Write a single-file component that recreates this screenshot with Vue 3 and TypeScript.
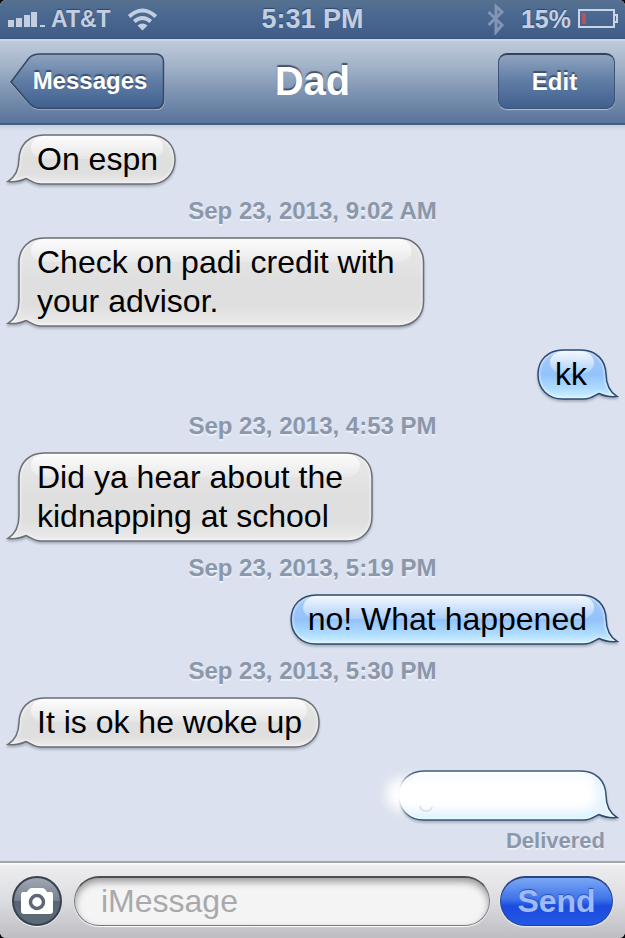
<script setup lang="ts">
import { onBeforeUnmount, onMounted, reactive, ref } from 'vue'

interface Entry {
  kind: 'stamp' | 'received' | 'sent'
  text: string
  smudged?: boolean
}

const entries: Entry[] = [
  { kind: 'received', text: 'On espn' },
  { kind: 'stamp', text: 'Sep 23, 2013, 9:02 AM' },
  { kind: 'received', text: 'Check on padi credit with\nyour advisor.' },
  { kind: 'sent', text: 'kk' },
  { kind: 'stamp', text: 'Sep 23, 2013, 4:53 PM' },
  { kind: 'received', text: 'Did ya hear about the\nkidnapping at school' },
  { kind: 'stamp', text: 'Sep 23, 2013, 5:19 PM' },
  { kind: 'sent', text: 'no! What happened' },
  { kind: 'stamp', text: 'Sep 23, 2013, 5:30 PM' },
  { kind: 'received', text: 'It is ok he woke up' },
  { kind: 'sent', text: '', smudged: true },
]

const draft = ref('')
const list = ref<HTMLElement | null>(null)
const sizes = reactive<Record<number, { w: number; h: number }>>({})
let observer: ResizeObserver | undefined

function measure() {
  list.value?.querySelectorAll<HTMLElement>('.bubble').forEach((el) => {
    sizes[Number(el.dataset.index)] = { w: el.offsetWidth, h: el.offsetHeight }
  })
}

onMounted(() => {
  measure()
  observer = new ResizeObserver(measure)
  list.value?.querySelectorAll('.bubble').forEach((el) => observer?.observe(el))
})
onBeforeUnmount(() => observer?.disconnect())

const width = (i: number) => sizes[i]?.w ?? 100
const height = (i: number) => sizes[i]?.h ?? 51

// Outline of a bubble whose tail points to the lower left.
function outline(i: number): string {
  const r = width(i) - 1
  const b = height(i) - 1
  return [
    `M12 26 C12 11 22 1 37 1 H${r - 25}`,
    `C${r - 10} 1 ${r} 11 ${r} 25.5 V${b - 24.5}`,
    `C${r} ${b - 10} ${r - 10} ${b} ${r - 25} ${b} H34`,
    `C27 ${b} 23 ${b - 4} 19 ${b - 5.5}`,
    `C14 ${b - 3} 7 ${b - 2} 1 ${b - 2.5}`,
    `C8 ${b - 7} 12 ${b - 14} 12 ${b - 25} Z`,
  ].join(' ')
}
</script>

<template>
  <div class="phone">
    <div class="status">
      <div class="status-side">
        <svg class="signal" width="38" height="18" viewBox="0 0 38 18" aria-hidden="true">
          <path d="M0 10h6v7H0zM8 8h6v9H8zM16 5h6v12h-6zM23 2h6v15h-6zM32 15h5v2h-5z" />
        </svg>
        <span class="carrier">AT&amp;T</span>
        <svg class="wifi" width="32" height="24" viewBox="0 0 32 24" aria-hidden="true">
          <path class="arc" d="M2.200 9.500Q15.500-2.500 28.800 9.500" />
          <path class="arc" d="M7.200 14.500Q15.500 7.500 23.800 14.500" />
          <path d="M10.500 18.500Q15.500 14.500 20.500 18.500L15.500 23.500z" />
        </svg>
      </div>
      <span class="clock">5:31 PM</span>
      <div class="status-side right">
        <svg class="bluetooth" width="18" height="32" viewBox="0 0 18 32" aria-hidden="true">
          <path d="M1.500 9L15 22 9 29V3.500L15 9 1.500 22" />
        </svg>
        <span class="charge">15%</span>
        <svg class="battery" width="42" height="22" viewBox="0 0 42 22" aria-hidden="true">
          <rect class="case" x="2" y="2" width="35" height="17" />
          <path class="case" d="M37 7h3v7h-3" />
          <rect class="level" x="5" y="5" width="4" height="11" />
        </svg>
      </div>
    </div>

    <header class="nav">
      <button class="back" type="button">
        <svg width="156" height="58" viewBox="0 0 156 58" aria-hidden="true">
          <defs>
            <linearGradient id="back-fill" x1="0" y1="0" x2="0" y2="1">
              <stop offset="0" stop-color="#8fa3c0" />
              <stop offset="0.5" stop-color="#5f7ca4" />
              <stop offset="1" stop-color="#3f608f" />
            </linearGradient>
          </defs>
          <path class="back-light" d="M1 30.500L19 6Q23 2 30 2H146Q154 2 154 10V48.500Q154 56.500 146 56.500H32Q24 56.500 20 52z" />
          <path class="back-shape" d="M1 29L19 5Q23 1 30 1H145Q153.500 1 153.500 9V47Q153.500 55.500 145 55.500H32Q24 55.500 20 51z" />
        </svg>
        <span>Messages</span>
      </button>
      <h1>Dad</h1>
      <button class="edit" type="button">Edit</button>
    </header>

    <main class="chat">
      <ol ref="list">
        <li v-for="(entry, i) in entries" :key="i" :class="entry.kind">
          <time v-if="entry.kind === 'stamp'">{{ entry.text }}</time>
          <div
            v-else
            class="bubble"
            :class="{ multiline: entry.text.includes('\n'), smudged: entry.smudged }"
            :data-index="i"
          >
            <svg class="skin" :viewBox="`0 0 ${width(i)} ${height(i)}`" aria-hidden="true">
              <defs>
                <linearGradient :id="`fill-${i}`" x1="0" y1="0" x2="0" y2="1">
                  <stop class="stop-top" offset="0" />
                  <stop class="stop-mid" offset="0.5" />
                  <stop class="stop-low" offset="0.78" />
                  <stop class="stop-end" offset="1" />
                </linearGradient>
                <linearGradient :id="`gloss-${i}`" x1="0" y1="0" x2="0" y2="1">
                  <stop offset="0" stop-color="#fff" stop-opacity="0.85" />
                  <stop offset="1" stop-color="#fff" stop-opacity="0.2" />
                </linearGradient>
                <clipPath :id="`clip-${i}`"><path :d="outline(i)" /></clipPath>
              </defs>
              <path :d="outline(i)" :fill="`url(#fill-${i})`" />
              <g :clip-path="`url(#clip-${i})`">
                <path class="rim" :d="outline(i)" />
                <rect x="24" y="2" :width="width(i) - 37" height="23" rx="14" :fill="`url(#gloss-${i})`" />
              </g>
              <path class="edge" :d="outline(i)" />
            </svg>
            <p>{{ entry.text }}</p>
            <template v-if="entry.smudged">
              <span class="smudge"></span>
              <svg class="curl" width="14" height="8" viewBox="0 0 14 8" aria-hidden="true">
                <path d="M1 1Q2 6 7 6T13 2" />
              </svg>
            </template>
          </div>
        </li>
      </ol>
      <p class="receipt">Delivered</p>
    </main>

    <form class="compose" @submit.prevent>
      <button class="camera" type="button" aria-label="Camera">
        <svg width="34" height="28" viewBox="0 0 34 28" aria-hidden="true">
          <path d="M3 5H7Q9 1 12 1H22Q25 1 27 5H31Q33 5 33 8V24Q33 27 30 27H4Q1 27 1 24V8Q1 5 3 5z" />
          <circle cx="17" cy="15" r="6.500" />
        </svg>
      </button>
      <input v-model="draft" type="text" placeholder="iMessage" aria-label="iMessage" />
      <button class="send" type="submit">Send</button>
    </form>
  </div>
</template>

<style>
body {
  background: #05080c;
}
</style>

<style scoped>
.phone {
  display: flex;
  flex-direction: column;
  min-height: 100vh;
  overflow: hidden;
  border-radius: 6px;
  background: #dbe1ee;
  font-family: 'Liberation Sans', Arial, sans-serif;
}

button {
  font: inherit;
  border: 0;
  padding: 0;
  cursor: pointer;
}

.status {
  display: grid;
  grid-template-columns: 1fr auto 1fr;
  align-items: center;
  height: 39px;
  box-sizing: border-box;
  padding: 0 6px;
  background: linear-gradient(#56708f, #4d6b92 30%, #3e5c86);
  border-bottom: 1px solid #38547b;
  color: #c3cfe1;
  font-weight: bold;
  text-shadow: 0 -1px 1px #2e486c;
}

.status-side {
  display: flex;
  align-items: center;
}

.status-side.right {
  justify-content: flex-end;
}

.status svg {
  fill: #c3cfe1;
}

.signal {
  margin-left: 2px;
}

.carrier {
  margin: 0 16px 0 5px;
  font-size: 23px;
}

.clock {
  font-size: 27px;
}

.charge {
  margin: 0 6px 0 16px;
  font-size: 25px;
}

.status .arc {
  fill: none;
  stroke: #c3cfe1;
  stroke-width: 4;
}

.status .bluetooth {
  fill: none;
  stroke: #8296b4;
  stroke-width: 3;
}

.status .case {
  fill: none;
  stroke: #c9d4e5;
  stroke-width: 2;
}

.status .level {
  fill: #b3555f;
}

.nav {
  display: grid;
  grid-template-columns: 1fr auto 1fr;
  align-items: center;
  height: 86px;
  box-sizing: border-box;
  padding: 0 10px 2px;
  background: linear-gradient(#bfcbdc, #a3b3c9 30%, #8096b4 60%, #59749a);
  border-top: 2px solid #ccd5e3;
  border-bottom: 2px solid #435f88;
  color: #fff;
  font-weight: bold;
}

.nav h1 {
  margin: 0;
  font-size: 40px;
  line-height: 56px;
  text-shadow: 0 -2px 1px #44546c;
}

.back,
.edit {
  height: 56px;
  font-size: 24px;
  font-weight: bold;
  color: #fff;
  text-shadow: 0 -2px 1px #394f70;
}

.back {
  position: relative;
  width: 154px;
  padding-left: 6px;
  background: none;
}

.back svg {
  position: absolute;
  left: 0;
  top: 0;
}

.back span {
  position: relative;
}

.back-light {
  fill: none;
  stroke: #b4c2d6;
  stroke-width: 1;
}

.back-shape {
  fill: url(#back-fill);
  stroke: #33475f;
  stroke-width: 1.5;
}

.edit {
  justify-self: end;
  width: 117px;
  padding-right: 4px;
  border: 1px solid #3c5373;
  border-top: 2px solid #33435a;
  border-radius: 9px;
  background: linear-gradient(#8fa3c0, #5f7ca4 50%, #3f608f);
  box-shadow: 0 1px 1px #b4c2d6;
}

.chat {
  flex: 1;
  padding: 9px 7px 0;
  background: linear-gradient(#c6cfdf, #dbe1ee 6px);
}

ol {
  display: flex;
  flex-direction: column;
  margin: 0;
  padding: 0;
  list-style: none;
}

.received,
.sent {
  display: flex;
}

.sent {
  justify-content: flex-end;
}

.received + .sent {
  margin-top: 22px;
}

.stamp {
  text-align: center;
  font-size: 24px;
  font-weight: bold;
  line-height: 52px;
  color: #8b97aa;
  text-shadow: 0 2px 0 #ebeff6;
}

.bubble {
  position: relative;
  box-sizing: border-box;
  min-height: 51px;
  padding: 6px 18px 6px 30px;
}

.bubble.multiline {
  padding-right: 30px;
}

.sent .bubble {
  padding: 6px 31px 6px 18px;
}

.bubble p {
  position: relative;
  margin: 0;
  font-size: 32px;
  line-height: 39px;
  white-space: pre-line;
  color: #000;
}

.skin {
  position: absolute;
  left: 0;
  top: 0;
  width: 100%;
  height: 100%;
  overflow: visible;
  filter: drop-shadow(0 2px 1px rgba(70, 80, 100, 0.35));
}

.sent .skin {
  transform: scaleX(-1);
}

.stop-top { stop-color: #e9e9e9; }
.stop-mid { stop-color: #dfdfdf; }
.stop-low { stop-color: #dfdfdf; }
.stop-end { stop-color: #ececec; }
.sent .stop-top { stop-color: #a6cbf8; }
.sent .stop-mid { stop-color: #93c2fb; }
.sent .stop-low { stop-color: #addbff; }
.sent .stop-end { stop-color: #d3f4ff; }

.rim {
  fill: none;
  stroke: #fff;
  stroke-width: 4;
  opacity: 0.5;
  filter: blur(1px);
}

.edge {
  fill: none;
  stroke: #6c6f76;
  stroke-width: 1.5;
}

.sent .edge {
  stroke: #2e4a70;
}

.sent .bubble.smudged {
  width: 220px;
}

.smudged .stop-top,
.smudged .stop-mid,
.smudged .stop-low {
  stop-color: #e4f2ff;
}

.smudge {
  position: absolute;
  inset: 8px 20px 10px -12px;
  border-radius: 20px;
  background: #fff;
  filter: blur(6px);
}

.curl {
  position: absolute;
  left: 21px;
  bottom: 8px;
  fill: none;
  stroke: #dfe2e6;
  stroke-width: 2;
}

.receipt {
  margin: 0;
  padding-right: 13px;
  text-align: right;
  font-size: 22px;
  font-weight: bold;
  line-height: 40px;
  color: #8b97aa;
  text-shadow: 0 2px 0 #ebeff6;
}

.compose {
  display: flex;
  gap: 10px;
  padding: 13px 12px 12px;
  border-top: 2px solid #a4a5ab;
  background: linear-gradient(#fff, #ededf0 3px, #dcdde0 50%, #bdbdc3);
}

.camera {
  display: grid;
  place-items: center;
  flex: none;
  width: 50px;
  height: 50px;
  box-sizing: border-box;
  margin-right: 2px;
  border: 2px solid #38424f;
  border-radius: 50%;
  background: linear-gradient(#a0a8b2, #74808e 50%, #596673 51%, #5d6b79);
  box-shadow: 0 1px 1px #f4f4f6;
}

.camera path {
  fill: #fff;
}

.camera circle {
  fill: #fff;
  stroke: #5c6875;
  stroke-width: 3.5;
}

input {
  flex: 1;
  min-width: 0;
  height: 50px;
  box-sizing: border-box;
  padding: 0 26px;
  border: 1px solid #77787b;
  border-top: 2px solid #4c4d50;
  border-radius: 25px;
  outline: 0;
  background: #f4f4f4;
  box-shadow: inset 0 4px 7px #9a9a9d, 0 1px 1px #fff;
  font: 32px 'Liberation Sans', Arial, sans-serif;
  color: #000;
}

input::placeholder {
  color: #a9a9ab;
  opacity: 1;
}

.send {
  flex: none;
  width: 113px;
  height: 50px;
  border: 1px solid #24448e;
  border-top: 2px solid #2a4580;
  border-radius: 25px;
  background: linear-gradient(#7aa8f5, #3f73e8 45%, #1b4bdf 60%, #2458e6);
  box-shadow: 0 1px 2px #eef2ff;
  font-size: 32px;
  font-weight: bold;
  color: #9dbbfa;
  text-shadow: 0 -1px 1px #2c50b4;
}
</style>
